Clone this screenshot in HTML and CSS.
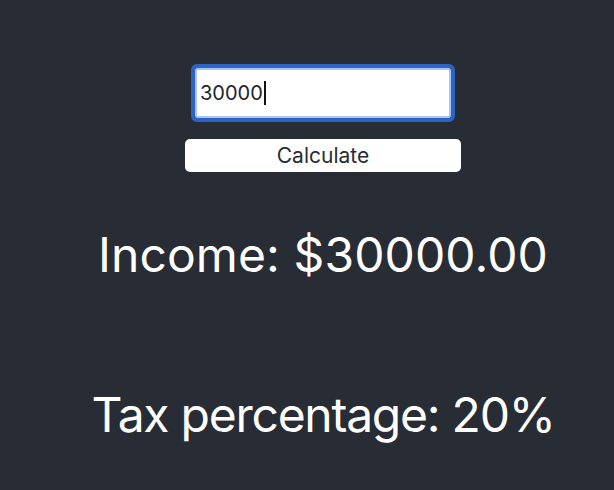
FILE: index.html
```html
<!DOCTYPE html>
<html lang="en">
<head>
<meta charset="utf-8">
<title>Tax Calculator</title>
<link rel="stylesheet" href="styles.css">
</head>
<body>
<main class="app">
  <div class="field" role="textbox" aria-label="Income"><span class="value">30000</span><span class="caret"></span></div>
  <button class="calc-btn" type="button">Calculate</button>
  <p class="result income">Income: $30000.00</p>
  <p class="result tax">Tax percentage: 20%</p>
</main>
</body>
</html>
```
FILE: styles.css
```css
html, body {
  margin: 0;
  padding: 0;
  background: #282c34;
  height: 100%;
}
.app {
  display: flex;
  flex-direction: column;
  align-items: center;
  padding: 68px 0 0 32px;
  font-family: Inter, "Noto Sans", sans-serif;
}
.field {
  box-sizing: border-box;
  width: 256px;
  height: 50px;
  background: #fff;
  border: 2px solid #a9c4ef;
  outline: 4px solid #2e63c6;
  border-radius: 2px;
  padding-left: 3px;
  display: flex;
  align-items: center;
  font-size: 20px;
  color: #22252b;
}
.caret {
  display: inline-block;
  width: 2px;
  height: 24px;
  background: #111;
  margin-left: 1px;
}
.calc-btn {
  box-sizing: border-box;
  margin-top: 21px;
  width: 276px;
  height: 33px;
  border: none;
  border-radius: 5px;
  background: #fff;
  font-family: Inter, "Noto Sans", sans-serif;
  font-size: 21px;
  color: #282c34;
  padding: 0;
}
.result {
  margin: 0;
  font-size: 48px;
  line-height: 48px;
  color: #fff;
}
.income {
  margin-top: 59px;
  letter-spacing: 0.1px;
}
.tax {
  margin-top: 112px;
  letter-spacing: -1.25px;
}
```
